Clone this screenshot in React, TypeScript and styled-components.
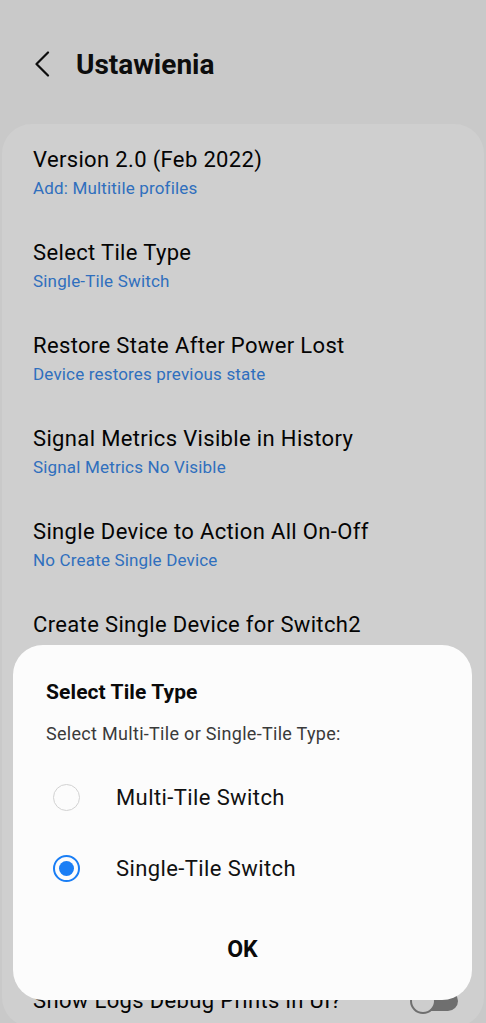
import React, { useState } from 'react';
import styled, { createGlobalStyle } from 'styled-components';

const GlobalStyle = createGlobalStyle`
    html, body {
        margin: 0;
        padding: 0;
        background: #f6f6f6;
        font-family: Roboto, 'Noto Sans', sans-serif;
    }
`;

const Screen = styled.div`
    position: relative;
    width: 486px;
    height: 1023px;
    overflow: hidden;
    background: #f6f6f6;
`;

const Header = styled.div`
    height: 124px;
    display: flex;
    align-items: center;
    padding: 4px 0 0 34px;
    box-sizing: border-box;
    gap: 26px;
`;

const BackButton = styled.button`
    border: none;
    background: transparent;
    padding: 0;
    width: 16px;
    height: 26px;
    display: flex;
    color: #111;
`;

const Title = styled.h1`
    margin: 0;
    font-size: 28px;
    font-weight: 700;
    color: #111;
`;

const Card = styled.div`
    margin: 0 2px;
    padding-top: 2px;
    background: #fdfdfd;
    border-radius: 30px;
`;

const Row = styled.div<{ $compact?: boolean }>`
    height: ${(p) => (p.$compact ? '52px' : '93px')};
    padding: ${(p) => (p.$compact ? '12px 26px 0 31px' : '0 26px 0 31px')};
    display: flex;
    align-items: center;
    justify-content: space-between;
`;

const RowText = styled.div`
    display: flex;
    flex-direction: column;
`;

const RowTitle = styled.div`
    font-size: 22px;
    line-height: 28px;
    letter-spacing: 0.35px;
    color: #050505;
`;

const RowValue = styled.div`
    margin-top: 3px;
    font-size: 17px;
    line-height: 22px;
    letter-spacing: 0.17px;
    color: #3a88e8;
`;

const Toggle = styled.div<{ $on?: boolean }>`
    position: relative;
    width: 44px;
    height: 20px;
    border-radius: 10px;
    background: ${(p) => (p.$on ? '#3a88e8' : '#888')};
    &::after {
        content: '';
        position: absolute;
        left: -4px;
        top: -3px;
        width: 26px;
        height: 26px;
        border-radius: 50%;
        box-sizing: border-box;
        border: 2px solid #888;
        background: #fbfbfb;
    }
`;

const Dim = styled.div`
    position: absolute;
    inset: 0;
    background: rgba(0, 0, 0, 0.18);
`;

const Dialog = styled.div`
    position: absolute;
    left: 13px;
    right: 14px;
    top: 645px;
    background: #fcfcfc;
    border-radius: 30px;
    padding: 34px 33px 23px;
    display: flex;
    flex-direction: column;
`;

const DialogTitle = styled.div`
    font-size: 21px;
    line-height: 26px;
    font-weight: 700;
    letter-spacing: 0.1px;
    color: #0a0a0a;
`;

const DialogText = styled.div`
    margin-top: 18px;
    font-size: 18px;
    line-height: 22px;
    letter-spacing: 0.3px;
    color: #3a3a3a;
`;

const Options = styled.div`
    margin-top: 17px;
    display: flex;
    flex-direction: column;
`;

const Option = styled.label`
    height: 71px;
    display: flex;
    align-items: center;
    gap: 36px;
    padding-left: 7px;
    font-size: 22px;
    letter-spacing: 0.4px;
    color: #111;
    cursor: pointer;
`;

const Radio = styled.span<{ $checked: boolean }>`
    width: 27px;
    height: 27px;
    box-sizing: border-box;
    border-radius: 50%;
    border: ${(p) => (p.$checked ? '2px solid #1a7ef5' : '1.5px solid #d2d2d2')};
    display: flex;
    align-items: center;
    justify-content: center;
    flex-shrink: 0;
    &::after {
        content: '';
        width: 15px;
        height: 15px;
        border-radius: 50%;
        background: ${(p) => (p.$checked ? '#1a7ef5' : 'transparent')};
    }
`;

const OkButton = styled.button`
    margin-top: 17px;
    height: 56px;
    border: none;
    background: transparent;
    font-family: inherit;
    font-size: 23px;
    font-weight: 700;
    color: #0a0a0a;
    cursor: pointer;
`;

const rows = [
    { title: 'Version 2.0 (Feb 2022)', value: 'Add: Multitile profiles' },
    { title: 'Select Tile Type', value: 'Single-Tile Switch' },
    { title: 'Restore State After Power Lost', value: 'Device restores previous state' },
    { title: 'Signal Metrics Visible in History', value: 'Signal Metrics No Visible' },
    { title: 'Single Device to Action All On-Off', value: 'No Create Single Device' },
    { title: 'Create Single Device for Switch2', value: 'No Create Single Device' },
    { title: 'Create Single Device for Switch3', value: 'No Create Single Device' },
    { title: 'Create Single Device for Switch4', value: 'No Create Single Device' },
    { title: 'Tile Type Refresh Interval', value: 'Every 30 seconds' },
];

const tileTypes = ['Multi-Tile Switch', 'Single-Tile Switch'];

const App: React.FC = () => {
    const [tileType, setTileType] = useState('Single-Tile Switch');
    return (
        <Screen>
            <GlobalStyle />
            <Header>
                <BackButton aria-label="back">
                    <svg width="16" height="26" viewBox="0 0 16 26" fill="none">
                        <path d="M14 1.5 L2.5 13 L14 24.5" stroke="currentColor" strokeWidth="2.2" strokeLinecap="round" strokeLinejoin="round" />
                    </svg>
                </BackButton>
                <Title>Ustawienia</Title>
            </Header>
            <Card>
                {rows.map((r) => (
                    <Row key={r.title}>
                        <RowText>
                            <RowTitle>{r.title}</RowTitle>
                            <RowValue>{r.value}</RowValue>
                        </RowText>
                    </Row>
                ))}
                <Row $compact>
                    <RowTitle>Show Logs Debug Prints in UI?</RowTitle>
                    <Toggle />
                </Row>
            </Card>
            <Dim />
            <Dialog>
                <DialogTitle>Select Tile Type</DialogTitle>
                <DialogText>Select Multi-Tile or Single-Tile Type:</DialogText>
                <Options>
                    {tileTypes.map((t) => (
                        <Option key={t} onClick={() => setTileType(t)}>
                            <Radio $checked={tileType === t} />
                            {t}
                        </Option>
                    ))}
                </Options>
                <OkButton>OK</OkButton>
            </Dialog>
        </Screen>
    );
};

export default App;
